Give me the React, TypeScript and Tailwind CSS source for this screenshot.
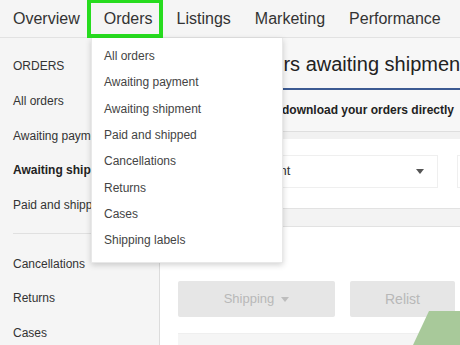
const navItems = ['Overview', 'Orders', 'Listings', 'Marketing', 'Performance'];

const sideTop = ['All orders', 'Awaiting payment', 'Awaiting shipment', 'Paid and shipped'];
const sideBottom = ['Cancellations', 'Returns', 'Cases'];

const menuItems = [
  'All orders',
  'Awaiting payment',
  'Awaiting shipment',
  'Paid and shipped',
  'Cancellations',
  'Returns',
  'Cases',
  'Shipping labels',
];

function Caret({ className }: { className?: string }) {
  return (
    <svg width="8" height="5" viewBox="0 0 8 5" className={className}>
      <path d="M0 0 L8 0 L4 5 Z" fill="currentColor" />
    </svg>
  );
}

export default function App() {
  return (
    <div
      className="relative w-[460px] h-[345px] overflow-hidden bg-white text-[#333]"
      style={{ fontFamily: '"Liberation Sans", Arial, sans-serif' }}
    >
      {/* Top nav */}
      <div className="flex h-[38px] items-center px-[1px] bg-[#f5f5f5] border-b border-[#e2e2e2]">
        {navItems.map((item) => (
          <div key={item} className="px-3 text-[16px] text-[#333] whitespace-nowrap">
            {item}
          </div>
        ))}
      </div>

      <div className="flex h-[307px]">
        {/* Sidebar */}
        <div className="w-[160px] shrink-0 bg-[#f5f5f5] border-r border-[#dcdcdc] pt-[11px] pl-[13px] text-[12px] overflow-hidden">
          <div className="h-[34.7px] flex items-center uppercase">Orders</div>
          {sideTop.map((item) => (
            <div
              key={item}
              className={
                item === 'Awaiting shipment'
                  ? 'h-[34.7px] flex items-center whitespace-nowrap font-bold text-[#222]'
                  : 'h-[34.7px] flex items-center whitespace-nowrap'
              }
            >
              {item}
            </div>
          ))}
          <div className="mt-[11px] mb-[12px] border-t border-[#e0e0e0]" />
          {sideBottom.map((item) => (
            <div key={item} className="h-[34.7px] flex items-center whitespace-nowrap">
              {item}
            </div>
          ))}
        </div>

        {/* Main */}
        <div className="flex-1 min-w-0 overflow-hidden bg-white">
          <div className="bg-[#f7f7f7] h-[94px] border-b border-[#dedede] overflow-hidden">
            <div className="h-[50px] flex items-center pl-[79px] text-[20px] text-[#222] whitespace-nowrap pt-[1px]">
              Orders awaiting shipment
            </div>
            <div className="h-[2px] bg-[#3c5a92]" />
            <div className="h-[40px] flex items-center pl-[48px] text-[12px] font-bold text-[#222] whitespace-nowrap pb-[1px]">
              Tip: You can download your orders directly
            </div>
          </div>
          <div className="h-[7px] bg-[#f1f1f1]" />
          <div className="h-[69px] flex items-center gap-[19px] pl-[18px] pb-[5px]">
            <div className="w-[260px] h-[33px] shrink-0 flex items-center justify-between pl-[6px] pr-[12px] border border-[#efefef] bg-white text-[13px]">
              <span>Awaiting shipment</span>
              <Caret className="text-[#555] mr-[1px]" />
            </div>
            <div className="w-[100px] h-[33px] shrink-0 border border-[#efefef] bg-white" />
          </div>
          <div className="h-[19px] bg-[#f3f3f3] border-y border-[#e2e2e2]" />
          <div className="h-[106px] flex items-end gap-[15px] pl-[18px] pb-[16px]">
            <div className="w-[157px] h-[36px] flex items-center justify-center gap-[7px] rounded-[2px] bg-[#e6e6e6] text-[13px] text-[#b8b8b8]">
              <span>Shipping</span>
              <Caret className="text-[#bdbdbd]" />
            </div>
            <div className="w-[105px] h-[36px] flex items-center justify-center rounded-[2px] bg-[#e6e6e6] text-[14px] text-[#b8b8b8]">
              Relist
            </div>
          </div>
          <div className="ml-[18px] h-[20px] bg-[#f5f5f5] border-t border-[#efefef]" />
        </div>
      </div>

      {/* Highlight around Orders */}
      <div className="absolute left-[87px] top-[-1px] w-[76px] h-[39px] border-4 border-[#27dc1f]" />

      {/* Orders dropdown */}
      <div className="absolute left-[91px] top-[38px] w-[192px] h-[225px] bg-white pt-[5px] shadow-[0_2px_6px_rgba(0,0,0,0.18)] border border-[#e8e8e8] border-t-0">
        {menuItems.map((item) => (
          <div key={item} className="h-[26.3px] flex items-center pl-[12px] text-[12px] text-[#444] whitespace-nowrap">
            {item}
          </div>
        ))}
      </div>

      {/* Decorative green corner */}
      <svg className="absolute right-0 bottom-0" width="47" height="34" viewBox="0 0 47 34">
        <polygon points="0,34 16,0 47,0 47,34" fill="#a8c99a" />
      </svg>
    </div>
  );
}
